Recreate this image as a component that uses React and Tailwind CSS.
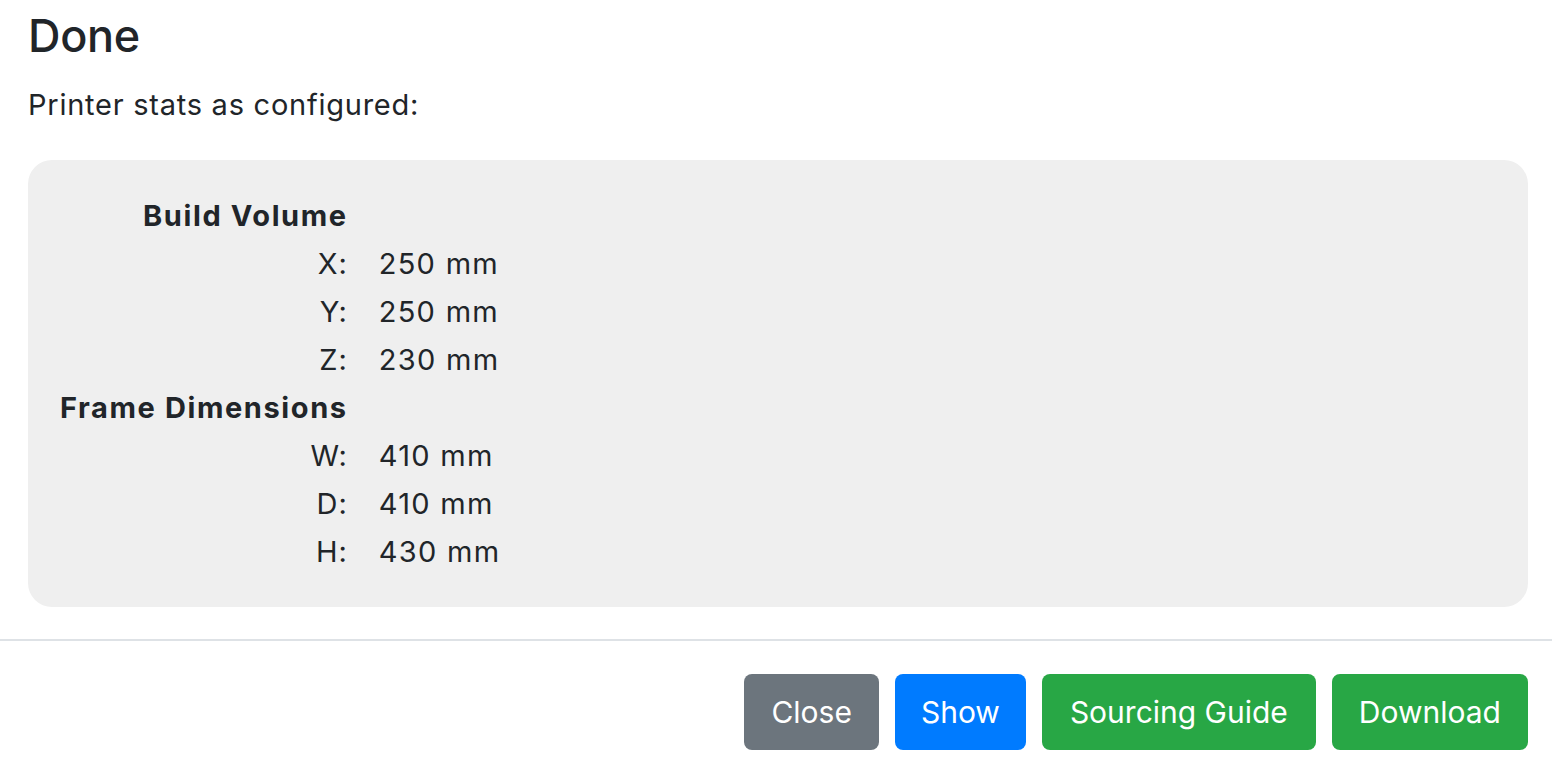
import React from 'react';

const sections = [
  {
    title: 'Build Volume',
    rows: [
      ['X:', '250 mm'],
      ['Y:', '250 mm'],
      ['Z:', '230 mm'],
    ],
  },
  {
    title: 'Frame Dimensions',
    rows: [
      ['W:', '410 mm'],
      ['D:', '410 mm'],
      ['H:', '430 mm'],
    ],
  },
];

const App = () => {
  return (
    <div className="w-[1552px] h-[776px] bg-white text-[#212529] overflow-hidden" style={{ fontFamily: 'Inter, "Noto Sans", sans-serif' }}>
      <div className="pl-[28px] pr-[24px]">
        <h1 className="pt-[8px] text-[45px] leading-[56px] font-medium tracking-[-0.3px]">Done</h1>
        <p className="mt-[20px] text-[29px] leading-[42px] tracking-[0.75px]">Printer stats as configured:</p>

        <div className="mt-[34px] rounded-[24px] bg-[#efefef] pt-[32px] pb-[31px] pl-[32px]">
          <div className="grid grid-cols-[auto_1fr] gap-x-[31px] text-[29px] leading-[48px]">
            {sections.map((section) => (
              <React.Fragment key={section.title}>
                <div className="text-right font-bold tracking-[1.6px]">{section.title}</div>
                <div></div>
                {section.rows.map(([label, value]) => (
                  <React.Fragment key={label}>
                    <div className="text-right tracking-[0.9px]">{label}</div>
                    <div className="tracking-[1.3px]">{value}</div>
                  </React.Fragment>
                ))}
              </React.Fragment>
            ))}
          </div>
        </div>
      </div>

      <div className="mt-[32px] border-t-2 border-[#dee2e6]"></div>

      <div className="flex justify-end gap-[16px] pr-[24px] pt-[33px]">
        <button className="h-[76px] px-[27px] rounded-[8px] bg-[#6c757d] text-white text-[30px]">Close</button>
        <button className="h-[76px] px-[26px] rounded-[8px] bg-[#007bff] text-white text-[30px]">Show</button>
        <button className="h-[76px] px-[28px] rounded-[8px] bg-[#28a745] text-white text-[30px]">Sourcing Guide</button>
        <button className="h-[76px] px-[27px] rounded-[8px] bg-[#28a745] text-white text-[30px]">Download</button>
      </div>
    </div>
  );
};

export default App;
